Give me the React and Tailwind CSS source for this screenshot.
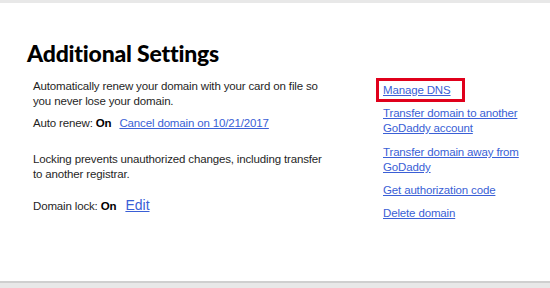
export default function App() {
  const links = [
    { label: "Transfer domain to another GoDaddy account", gap: "mt-[4px]" },
    { label: "Transfer domain away from GoDaddy", gap: "mt-[9px]" },
    { label: "Get authorization code", gap: "mt-[8px]" },
    { label: "Delete domain", gap: "mt-[8px]" },
  ]

  return (
    <div className="w-[550px] h-[288px] flex flex-col bg-white text-[#1f1f1f] font-['Liberation_Sans',Arial,sans-serif]">
      <div className="h-[3px] bg-[#e8e8e8]" />
      <div className="flex-1 flex flex-col pl-[27px] pt-[36px]">
        {/* Heading */}
        <h2 className="font-['Lato',sans-serif] font-black text-[23px] leading-[28px] tracking-[-0.2px] text-black">
          Additional Settings
        </h2>

        <div className="flex mt-[12px] pl-[6px] text-[11.5px] leading-[15px] tracking-[-0.15px]">
          {/* Left column */}
          <div className="w-[350px]">
            <p className="w-[290px]">
              Automatically renew your domain with your card on file so you never lose your domain.
            </p>
            <div className="mt-[7px]">
              Auto renew: <span className="font-bold text-black">On</span>
              <a href="#" className="ml-[8px] text-[#3a5fd6] underline">Cancel domain on 10/21/2017</a>
            </div>
            <p className="w-[290px] mt-[21px]">
              Locking prevents unauthorized changes, including transfer to another registrar.
            </p>
            <div className="mt-[16px] flex items-baseline">
              <span>Domain lock:&nbsp;</span>
              <span className="font-bold text-black">On</span>
              <a href="#" className="ml-[9px] text-[#3a5fd6] underline text-[14px] tracking-normal">Edit</a>
            </div>
          </div>

          {/* Right column */}
          <div className="flex flex-col w-[152px] -mt-[1px] -ml-[7px]">
            <div className="w-[89px] border-[3px] border-[#e0001b] pl-[4px] pt-[2px] pb-[1px]">
              <a href="#" className="text-[#3a5fd6] underline">Manage DNS</a>
            </div>
            {links.map((l) => (
              <a key={l.label} href="#" className={`${l.gap} ml-[7px] text-[#3a5fd6] underline`}>
                {l.label}
              </a>
            ))}
          </div>
        </div>
      </div>
      <div className="h-[2px] bg-[#cfcfcf]" />
      <div className="h-[5px] bg-[#e8e8e8]" />
    </div>
  )
}
